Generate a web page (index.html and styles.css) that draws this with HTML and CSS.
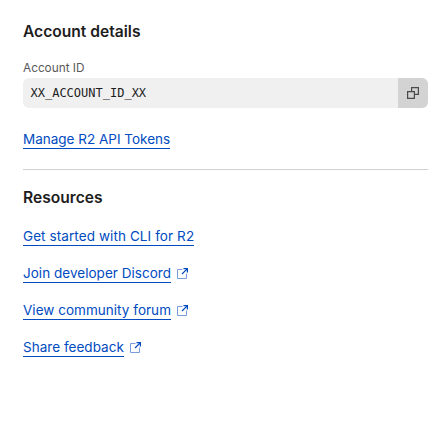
FILE: index.html
```html
<!DOCTYPE html>
<html lang="en"><head><meta charset="utf-8"><title>Account details</title><link rel="stylesheet" href="styles.css"></head>
<body>
<aside class="sidebar">
<section class="account">
<h2>Account details</h2>
<div class="label">Account ID</div>
<div class="field"><code>XX_ACCOUNT_ID_XX</code><button aria-label="Copy"><svg width="12" height="12" viewBox="0 0 12 12"><path d="M.6 4.6h6.8v6.8H.6zM4.6 4.6v-4h6.8v6.8h-4"/></svg></button></div>
<a class="tokens" href="#">Manage R2 API Tokens</a>
</section>
<section class="resources">
<h2>Resources</h2>
<ul>
<li><a class="guide" href="#">Get started with CLI for R2</a></li>
<li><a href="#">Join developer Discord</a><svg class="ext" viewBox="0 0 11 11"><path class="box" d="M5.5 1.5h-5v9h9v-5"/><path d="M6.5.6h3.9v3.9M10.2.8 5 6"/></svg></li>
<li><a href="#">View community forum</a><svg class="ext" viewBox="0 0 11 11"><path class="box" d="M5.5 1.5h-5v9h9v-5"/><path d="M6.5.6h3.9v3.9M10.2.8 5 6"/></svg></li>
<li><a href="#">Share feedback</a><svg class="ext" viewBox="0 0 11 11"><path class="box" d="M5.5 1.5h-5v9h9v-5"/><path d="M6.5.6h3.9v3.9M10.2.8 5 6"/></svg></li>
</ul>
</section>
</aside>
</body></html>
```
FILE: styles.css
```css
* { box-sizing: border-box; }
body { margin: 0; background: #fff; font-family: Inter, sans-serif; color: #1d1d1d; }
.sidebar { padding: 22px 20px 0 23px; }
h2 { margin: 0; font-size: 15.6px; line-height: 20px; font-weight: 600; }
.label { margin-top: 18px; font-size: 11.8px; line-height: 16px; color: #595959; }
.field { display: flex; height: 30px; margin-top: 2px; border-radius: 6px; overflow: hidden; background: #f0f0f0; }
code { flex: 1; padding-left: 7.5px; font: 12px/30px "DejaVu Sans Mono", monospace; }
button { width: 30px; padding: 0; border: 0; background: #d3d3d3; display: grid; place-items: center; }
svg { fill: none; stroke: #4a4a4a; stroke-width: 1.2; }
a { color: #004bbf; font-size: 13.5px; line-height: 18px; height: 19px; text-decoration: none; border-bottom: 1px solid; display: inline-block; letter-spacing: .03px; }
.tokens { margin-top: 22px; display: table; letter-spacing: 0; }
.guide { letter-spacing: .09px; }
.resources { border-top: 1px solid #d0d0d0; margin-top: 20px; padding-top: 18px; }
ul { list-style: none; margin: 19px 0 0; padding: 0; display: grid; gap: 18px; }
li { display: flex; align-items: center; height: 19px; gap: 6px; }
.ext { width: 11px; height: 11px; stroke: #004bbf; }
.box { stroke: #789bdc; stroke-width: 1; }
```
